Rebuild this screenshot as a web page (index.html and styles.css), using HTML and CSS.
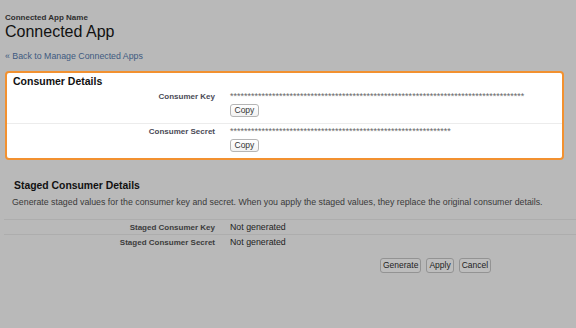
FILE: index.html
```html
<!DOCTYPE html>
<html lang="en">
<head>
  <meta charset="UTF-8">
  <title>Connected App</title>
  <link rel="stylesheet" href="styles.css">
</head>
<body>
  <div class="page">
    <div class="page-head">
      <div class="eyebrow">Connected App Name</div>
      <h1>Connected App</h1>
    </div>
    <a class="back" href="#">&laquo; Back to Manage Connected Apps</a>

    <section class="card">
      <h2>Consumer Details</h2>
      <div class="row">
        <div class="label">Consumer Key</div>
        <div class="value">
          <div class="mask">************************************************************************************</div>
          <button class="copy-btn">Copy</button>
        </div>
      </div>
      <div class="row">
        <div class="label">Consumer Secret</div>
        <div class="value">
          <div class="mask">***************************************************************</div>
          <button class="copy-btn">Copy</button>
        </div>
      </div>
    </section>

    <section class="staged">
      <h2>Staged Consumer Details</h2>
      <p class="desc">Generate staged values for the consumer key and secret. When you apply the staged values, they replace the original consumer details.</p>
      <div class="staged-table">
        <div class="srow">
          <div class="label">Staged Consumer Key</div>
          <div class="value">Not generated</div>
        </div>
        <div class="srow">
          <div class="label">Staged Consumer Secret</div>
          <div class="value">Not generated</div>
        </div>
      </div>
      <div class="actions">
        <button class="btn">Generate</button>
        <button class="btn">Apply</button>
        <button class="btn">Cancel</button>
      </div>
    </section>
  </div>
</body>
</html>
```

FILE: styles.css
```css
body {
  margin: 0;
  padding: 0;
  background: #b9b9b9;
  font-family: "Liberation Sans", Arial, sans-serif;
  color: #1a1a1a;
}
.page {
  padding: 13px 12px 0 5px;
}
.eyebrow {
  font-size: 8px;
  line-height: 10px;
  font-weight: bold;
  color: #2e2e2e;
}
h1 {
  margin: 0;
  font-size: 16px;
  line-height: 18px;
  font-weight: normal;
  color: #111;
}
.back {
  display: inline-block;
  margin-top: 10px;
  font-size: 8.8px;
  line-height: 11px;
  color: #3e5a80;
  text-decoration: none;
}
.card {
  margin-top: 8px;
  background: #fff;
  border: 2px solid #f29130;
  border-radius: 4px;
  padding-top: 2px;
}
.card h2 {
  margin: 0 0 1px 0;
  padding-left: 6px;
  font-size: 10.5px;
  line-height: 13px;
  color: #111;
}
.row {
  display: grid;
  grid-template-columns: 208px 1fr;
  column-gap: 15px;
  padding: 2px 0 6px 0;
}
.row + .row {
  border-top: 1px solid #ececec;
}
.label {
  text-align: right;
  font-size: 8px;
  line-height: 11px;
  font-weight: bold;
  color: #4a4a56;
}
.mask {
  font-size: 9px;
  line-height: 11px;
  color: #666;
  white-space: nowrap;
}
.copy-btn {
  display: block;
  margin-top: 2px;
  height: 13px;
  padding: 0 3.5px;
  font-family: inherit;
  font-size: 8.5px;
  line-height: 11px;
  color: #333;
  background: linear-gradient(#fff, #f2f2f2);
  border: 1px solid #b5b5b5;
  border-radius: 3px;
}
.staged {
  margin-top: 19px;
}
.staged h2 {
  margin: 0;
  padding-left: 9px;
  font-size: 10.4px;
  line-height: 13px;
  color: #111;
}
.desc {
  margin: 5px 0 0 0;
  padding-left: 7px;
  font-size: 8.8px;
  line-height: 11px;
  color: #3a3a3a;
}
.staged-table {
  margin: 11px -12px 0 -1px;
}
.srow {
  display: grid;
  grid-template-columns: 211px 1fr;
  column-gap: 15px;
  padding: 2px 0 1px 0;
}
.srow:first-child {
  border-top: 1px solid #adadad;
}
.srow + .srow {
  border-top: 1px solid #adadad;
}
.srow .label {
  color: #3c3c3c;
}
.srow .value {
  font-size: 8.8px;
  line-height: 11px;
  color: #1e1e1e;
}
.actions {
  display: flex;
  gap: 5px;
  margin-top: 9px;
  padding-left: 375px;
}
.btn {
  height: 15px;
  padding: 0 2px;
  font-family: inherit;
  font-size: 8.5px;
  line-height: 13px;
  color: #1d1d1d;
  background: #bdbdbd;
  border: 1px solid #939393;
  border-radius: 3px;
}
```
